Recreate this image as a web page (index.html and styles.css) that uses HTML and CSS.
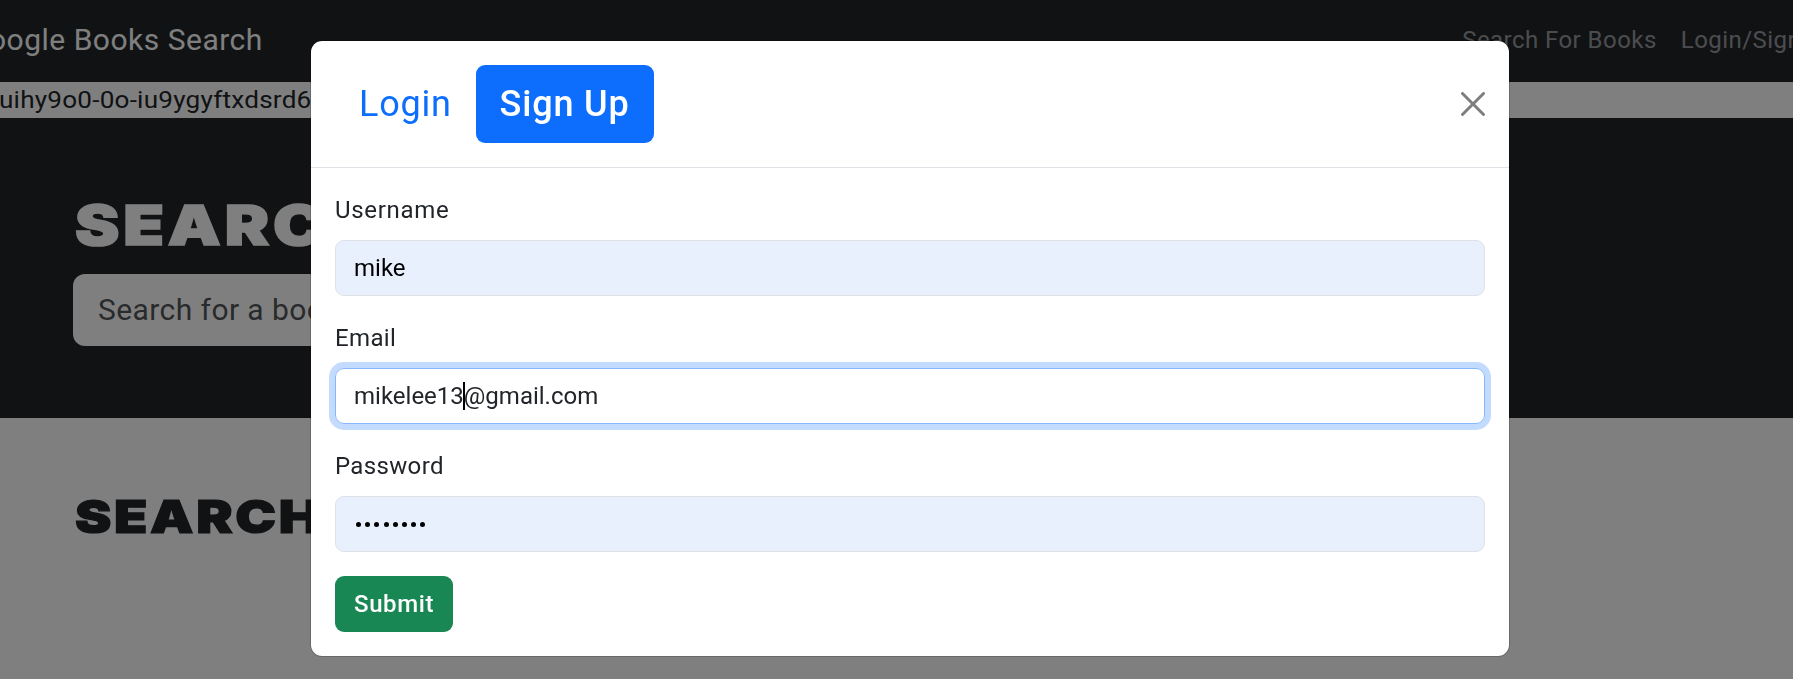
FILE: index.html
```html
<!DOCTYPE html>
<html lang="en">
<head>
<meta charset="utf-8">
<title>Google Books Search</title>
<link rel="stylesheet" href="styles.css">
</head>
<body>
<div class="page">
  <nav class="navbar">
    <span class="brand">Google Books Search</span>
    <div class="links"><a>Search For Books</a><a>Login/Sign Up</a></div>
  </nav>
  <div class="strip"><span>uihy9o0-0o-iu9ygyftxdsrd6</span></div>
  <header class="hero">
    <h1>SEARCH</h1>
    <div class="search">Search for a book</div>
  </header>
  <main class="results"><h2>SEARCH</h2></main>
</div>
<div class="backdrop"></div>
<section class="modal">
  <div class="modal-header">
    <div class="tabs"><a class="tab tab-login">Login</a><a class="tab active">Sign Up</a></div>
    <svg class="close" viewBox="0 0 16 16"><path d="M.293.293a1 1 0 0 1 1.414 0L8 6.586 14.293.293a1 1 0 1 1 1.414 1.414L9.414 8l6.293 6.293a1 1 0 0 1-1.414 1.414L8 9.414l-6.293 6.293a1 1 0 0 1-1.414-1.414L6.586 8 .293 1.707a1 1 0 0 1 0-1.414z"/></svg>
  </div>
  <form class="modal-body">
    <label class="label-user">Username</label>
    <div class="field filled">mike</div>
    <label>Email</label>
    <div class="field focus"><span>mikelee13</span><i class="caret"></i><span>@gmail.com</span></div>
    <label>Password</label>
    <div class="field filled"><span class="dots"><i></i><i></i><i></i><i></i><i></i><i></i><i></i><i></i></span></div>
    <button type="button" class="submit">Submit</button>
  </form>
</section>
</body>
</html>
```
FILE: styles.css
```css
*{box-sizing:border-box}
body{margin:0;height:679px;overflow:hidden;background:#fff;color:#212529;font:24px/36px Roboto,"Open Sans",sans-serif}
.page{height:679px;overflow:hidden}
h1,h2{margin:0;width:max-content;font-family:Inter,sans-serif;font-weight:900;white-space:nowrap;transform:scaleX(1.2);transform-origin:0 0}
.navbar{height:82px;padding-bottom:2px;background:#212529;display:flex;justify-content:space-between;align-items:center;overflow:hidden;white-space:nowrap}
.brand{color:#fff;font-size:30px;letter-spacing:.5px;margin-left:-32px}
.links{display:flex;gap:24px;color:rgba(255,255,255,.55);letter-spacing:.45px;margin-right:-44.5px}
.strip{height:36px}
.strip span{display:inline-block;margin-left:-1.5px;letter-spacing:.2px;transform:scaleX(1.088);transform-origin:0 0}
.hero{height:300px;background:#212529;color:#fff;padding:72px 73px}
.hero h1{margin-left:2px;font-size:55.5px;line-height:69px;height:84px;letter-spacing:3.2px;-webkit-text-stroke:1.6px #fff}
.search{height:72px;width:800px;background:#fff;border-radius:12px;padding:0 25px;font-size:30px;line-height:72px;letter-spacing:.42px;color:rgba(33,37,41,.8)}
.results{padding:70px 73px}
.results h2{margin-left:2px;font-size:45.5px;line-height:57px;letter-spacing:2.2px;-webkit-text-stroke:1.2px #212529}
.backdrop{position:fixed;inset:0;background:rgba(0,0,0,.5)}
.modal{position:absolute;left:310px;top:40px;width:1200px;height:617px;background:#fff;background-clip:padding-box;border:1px solid rgba(0,0,0,.175);border-radius:12px}
.modal-header{height:127px;padding:24px;display:flex;align-items:center;justify-content:space-between;border-bottom:1px solid #dee2e6}
.tabs{display:flex}
.tab{padding:12px 24px;font-size:36px;line-height:54px;color:#0d6efd;border-radius:9px;letter-spacing:.8px;white-space:nowrap}
.tab-login{width:141px}
.tab.active{background:#0d6efd;color:#fff;width:178px;padding-left:23.5px;font-weight:500;letter-spacing:.85px}
.close{width:24px;height:24px;opacity:.5}
.modal-body{padding:24px;display:flex;flex-direction:column}
label{display:block;height:36px;margin-bottom:12px;letter-spacing:.35px}
.label-user{letter-spacing:.7px}
.field{height:56px;border:1px solid #dee2e6;border-radius:9px;padding:0 18px;display:flex;align-items:center;margin-bottom:24px}
.filled{background:#e8f0fe;color:#000}
.focus{border-color:#86b7fe;box-shadow:0 0 0 6px rgba(13,110,253,.25)}
.caret{width:2px;height:28px;margin:0 -1px;background:#000}
.dots{display:flex;gap:4.2px;margin-left:2px}
.dots i{width:5px;height:5px;border-radius:50%;background:#000}
.submit{align-self:flex-start;width:118px;height:56px;border:0;border-radius:9px;background:#198754;color:#fff;font:500 24px/36px Roboto,sans-serif;letter-spacing:.6px;padding:0}
```
